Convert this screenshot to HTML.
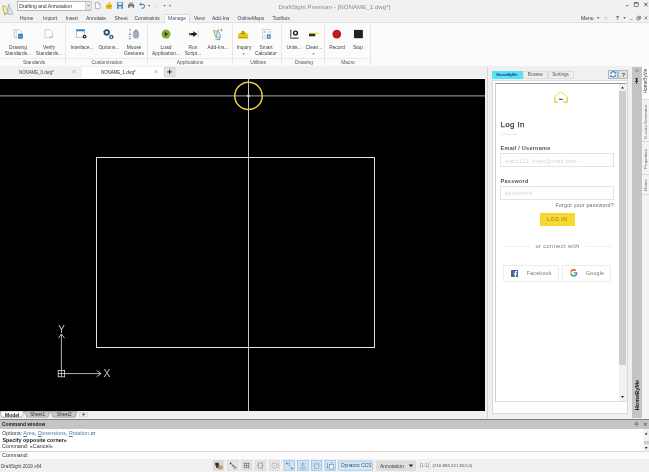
<!DOCTYPE html>
<html>
<head>
<meta charset="utf-8">
<title>DraftSight Premium - [NONAME_1.dwg*]</title>
<style>
*{box-sizing:border-box;margin:0;padding:0}
html,body{width:649px;height:472px;overflow:hidden;background:#f0f0f0;font-family:"Liberation Sans",sans-serif;color:#333}
#app{position:relative;width:649px;height:472px;overflow:hidden;background:#f0f0f0;will-change:transform}
.a{position:absolute}
.t{position:absolute;white-space:nowrap;font-size:5.2px;line-height:6px;color:#444}
.c{text-align:center;transform:translateX(-50%)}
/* title */
#title{left:0;top:0;width:649px;height:23px;background:#f1f1f1}
#combo{left:17px;top:1px;width:74px;height:10px;background:#fff;border:1px solid #b8b8b8}
#ribbon{left:0;top:22px;width:649px;height:44.500px;background:#fbfbfb;border-top:0.700px solid #e0e0e0;border-bottom:0.800px solid #d6d6d6}
.rt{top:15.100px;font-size:5px;color:#444}
.vsep{position:absolute;top:24.500px;width:1px;height:40.500px;background:#e6e6e6}
.hsep{position:absolute;top:58px;height:1px;background:#ebebeb}
.gl{top:58.700px;color:#555}
.bl{top:44.100px;line-height:6.3px;color:#444}
.c.bl,.c.gl{transform:translateX(-50%) scaleX(0.940)}
#doctabs{left:0;top:66px;width:649px;height:12px;background:#f0f0f0}
#canvas{left:0;top:78.700px;width:485.200px;height:332.100px;background:#000;overflow:hidden}
</style>
</head>
<body>
<div id="app">
<!-- TITLE BAR -->
<div id="title" class="a"></div>
<div id="combo" class="a"></div>
<div class="t" style="left:19.200px;top:2.600px;color:#333;font-size:5.050px">Drafting and Annotation</div>
<div class="t" style="left:278.600px;top:3.200px;font-size:6.150px;line-height:7px;color:#8a8a8a">DraftSight Premium - [NONAME_1.dwg*]</div>


<!-- QUICK ACCESS + WINDOW CONTROLS -->
<svg class="a" style="left:0;top:0" width="649" height="23" viewBox="0 0 649 23">
  <!-- logo -->
  <path d="M2.600 6 C6.500 5.500 8 8.500 7.300 13 L4.800 14.600 Z" fill="#f1eec8" stroke="#b9b44a" stroke-width="1" stroke-linejoin="round"/>
  <path d="M4 13 L5.200 14.800 L6.500 13.600 Z" fill="#86a838"/>
  <path d="M8.600 4.200 L13.200 14.300 H7.800 Z" fill="#dfe8ee" stroke="#9fb3c0" stroke-width="0.800" stroke-linejoin="round"/>
  <!-- combo arrow -->
  <rect x="85.500" y="1.500" width="6" height="8.500" fill="#e6e6e6" stroke="#b5b5b5" stroke-width="0.500"/>
  <path d="M87.300 4.800 L88.500 6.200 L89.700 4.800" stroke="#555" stroke-width="0.600" fill="none"/>
  <!-- new -->
  <path d="M95.400 2.300 H98.200 L100 4.200 V8.600 H95.400 Z" fill="#fff" stroke="#8a8a8a" stroke-width="0.600"/>
  <path d="M98.200 2.300 V4.200 H100" stroke="#8a8a8a" stroke-width="0.500" fill="none"/>
  <!-- open -->
  <path d="M106.200 4.500 H108.500 V2.400 H110.500 V4.500 H111.800 V9 H106.200 Z" fill="#e5c21d"/>
  <path d="M106.200 6.300 H111.800" stroke="#8a7410" stroke-width="0.600"/>
  <!-- save -->
  <rect x="117.200" y="2.300" width="5.600" height="6.500" rx="0.500" fill="#2d7fc0"/>
  <rect x="118.400" y="2.600" width="3.200" height="2.300" fill="#e9f2fa"/>
  <rect x="118.700" y="6.200" width="2.600" height="2.600" fill="#dbe9f5"/>
  <!-- print -->
  <rect x="128" y="4.300" width="6.200" height="3.600" rx="0.800" fill="#6d6d6d"/>
  <rect x="129.300" y="2.600" width="3.600" height="2" fill="#8d8d8d"/>
  <rect x="129.500" y="6.300" width="3.200" height="2.200" fill="#e8e8e8"/>
  <!-- undo -->
  <path d="M140.200 4.300 H143 Q144.500 4.300 144.500 6 Q144.500 8 143 8.200 H141.500" fill="none" stroke="#2d7fc0" stroke-width="1"/>
  <path d="M141.200 2.600 L139.200 4.300 L141.200 6 Z" fill="#2d7fc0"/>
  <path d="M148 5 H150.200 L149.100 6.300 Z" fill="#333"/>
  <!-- redo (disabled) -->
  <path d="M158.500 4.300 H156.500 Q155.200 4.300 155.200 6 Q155.200 8 156.800 8.200 H158" fill="none" stroke="#dcdcdc" stroke-width="0.900"/>
  <path d="M163.500 5 H165.700 L164.600 6.300 Z" fill="#444"/>
  <rect x="169.300" y="5" width="1.400" height="1.400" fill="#666"/>
  <!-- window buttons -->
  <path d="M626 5.700 H628.200" stroke="#444" stroke-width="0.800"/>
  <rect x="634.200" y="2.800" width="4" height="3.800" fill="none" stroke="#444" stroke-width="0.600"/>
  <path d="M634.200 3 H638.200" stroke="#444" stroke-width="0.900"/>
  <path d="M644.200 2.700 L647.600 6.300 M647.600 2.700 L644.200 6.300" stroke="#333" stroke-width="0.800"/>
  <!-- second row -->
  <path d="M597 17.300 H599.400 L598.200 18.700 Z" fill="#333"/>
  <path d="M604.500 17 L607.500 19.300 M607.500 17 L604.500 19.300 M606 16.600 V19.700" stroke="#c2c2c2" stroke-width="0.500"/>
  <path d="M623.400 17.300 H625.800 L624.600 18.700 Z" fill="#333"/>
  <path d="M629.800 19.600 H632.600" stroke="#9a9a9a" stroke-width="0.700"/>
  <rect x="637" y="17.300" width="2.600" height="2.600" fill="none" stroke="#444" stroke-width="0.550"/>
  <path d="M638 17.300 V16.300 H640.600 V18.900 H639.600" fill="none" stroke="#444" stroke-width="0.550"/>
  <path d="M644.600 16.500 L647.400 19.500 M647.400 16.500 L644.600 19.500" stroke="#555" stroke-width="0.600"/>
</svg>
<div class="t" style="left:615.800px;top:15px;font-size:5.400px;font-weight:bold;color:#444">?</div>

<!-- RIBBON TABS -->
<div class="a" style="left:163.800px;top:13.700px;width:26px;height:9.300px;background:#fbfbfb;border:0.700px solid #dcdcdc;border-bottom:none;z-index:2"></div>
<div class="t rt" style="left:20px">Home</div>
<div class="t rt" style="left:43px">Import</div>
<div class="t rt" style="left:65.5px">Insert</div>
<div class="t rt" style="left:86px">Annotate</div>
<div class="t rt" style="left:114.5px">Sheet</div>
<div class="t rt" style="left:134.5px">Constraints</div>
<div class="t rt" style="left:168px;color:#44607e;z-index:3">Manage</div>
<div class="t rt" style="left:194px">View</div>
<div class="t rt" style="left:212px">Add-Ins</div>
<div class="t rt" style="left:237.5px">OnlineMaps</div>
<div class="t rt" style="left:272.5px">Toolbox</div>
<div class="t rt" style="left:581px;top:15px;color:#333">Menu</div>

<!-- RIBBON BODY -->
<div id="ribbon" class="a"></div>
<div class="vsep" style="left:65px"></div>
<div class="vsep" style="left:147px"></div>
<div class="vsep" style="left:232px"></div>
<div class="vsep" style="left:281px"></div>
<div class="vsep" style="left:324px"></div>
<div class="vsep" style="left:370px"></div>
<div class="hsep" style="left:0px;width:65px"></div>
<div class="hsep" style="left:66px;width:81px"></div>
<div class="hsep" style="left:148px;width:84px"></div>
<div class="hsep" style="left:233px;width:48px"></div>
<div class="hsep" style="left:282px;width:42px"></div>
<div class="hsep" style="left:325px;width:45px"></div>

<div class="t c bl" style="left:18px">Drawing<br>Standards...</div>
<div class="t c bl" style="left:49px">Verify<br>Standards...</div>
<div class="t c bl" style="left:81.700px">Interface...</div>
<div class="t c bl" style="left:108.600px">Options...</div>
<div class="t c bl" style="left:134px">Mouse<br>Gestures</div>
<div class="t c bl" style="left:166px">Load<br>Application...</div>
<div class="t c bl" style="left:193px">Run<br>Script...</div>
<div class="t c bl" style="left:218px">Add-Ins...</div>
<div class="t c bl" style="left:243.5px">Inquiry</div>
<div class="t c bl" style="left:266px">Smart<br>Calculator</div>
<div class="t c bl" style="left:294px">Units...</div>
<div class="t c bl" style="left:313.5px">Clean...</div>
<div class="t c bl" style="left:337px">Record</div>
<div class="t c bl" style="left:358px">Stop</div>

<div class="t c gl" style="left:34px">Standards</div>
<div class="t c gl" style="left:106.800px">Customization</div>
<div class="t c gl" style="left:190px">Applications</div>
<div class="t c gl" style="left:257.500px">Utilities</div>
<div class="t c gl" style="left:303.5px">Drawing</div>
<div class="t c gl" style="left:347.5px">Macro</div>


<!-- RIBBON ICONS -->
<svg class="a" style="left:0;top:0" width="649" height="66" viewBox="0 0 649 66">
  <!-- drawing standards -->
  <path d="M14.300 29.700 H19.300 L21.700 32.200 V37.700 H14.300 Z" fill="#fdfdfd" stroke="#b4b4b4" stroke-width="0.700"/>
  <path d="M16.300 29.700 V37.700" stroke="#c4c4c4" stroke-width="0.600"/>
  <rect x="18.200" y="33.800" width="4.600" height="4.900" rx="0.500" fill="#2a7dbd"/>
  <path d="M19.300 35.300 L21.500 37.600 M21.600 35.300 L19.300 37.600" stroke="#8cc4ea" stroke-width="0.700"/>
  <!-- verify standards -->
  <path d="M45 29.700 H50 L52.400 32.200 V37.700 H45 Z" fill="#fdfdfd" stroke="#bdbdbd" stroke-width="0.700"/>
  <path d="M49.600 36.300 L50.800 37.700 L52.800 35.200" stroke="#9a9a9a" stroke-width="0.700" fill="none"/>
  <!-- interface -->
  <rect x="76.600" y="29.800" width="8" height="7.400" fill="#fff" stroke="#9a9a9a" stroke-width="0.600"/>
  <rect x="76.300" y="29.500" width="8.600" height="1.800" fill="#2d7fc0"/>
  <circle cx="84.600" cy="36.600" r="1.900" fill="#2b2b2b"/>
  <circle cx="84.600" cy="36.600" r="0.700" fill="#fff"/>
  <!-- options -->
  <circle cx="106.700" cy="32.400" r="2.100" fill="none" stroke="#1f4e79" stroke-width="1.500"/>
  <circle cx="106.700" cy="32.400" r="3" fill="none" stroke="#1f4e79" stroke-width="1" stroke-dasharray="1.200 1.156"/>
  <circle cx="111.300" cy="36.900" r="1.400" fill="none" stroke="#1f4e79" stroke-width="1.100"/>
  <circle cx="111.300" cy="36.900" r="2" fill="none" stroke="#1f4e79" stroke-width="0.700" stroke-dasharray="0.800 0.770"/>
  <!-- mouse gestures -->
  <rect x="133" y="30.200" width="6" height="8.400" rx="2.800" fill="#a9adb3"/>
  <rect x="135.300" y="29.200" width="1.400" height="3" rx="0.700" fill="#7d8289"/>
  <path d="M130 29.400 V39" stroke="#3b8bd0" stroke-width="0.700" stroke-dasharray="1 1.200"/>
  <circle cx="130" cy="29.600" r="0.700" fill="#2d7fc0"/><circle cx="130" cy="34.200" r="0.800" fill="#2d7fc0"/><circle cx="130" cy="38.700" r="0.700" fill="#2d7fc0"/>
  <!-- load application -->
  <circle cx="166" cy="34.100" r="4.500" fill="#86a838"/>
  <path d="M164.800 32 L168 34.100 L164.800 36.200 Z" fill="#2a2a1a"/>
  <!-- run script -->
  <path d="M189 32.900 H193.300 V31.300 L197.300 34.100 L193.300 36.900 V35.300 H189 Z" fill="#1c1c1c"/>
  <path d="M189.600 32.900 V35.300 M190.700 32.900 V35.300" stroke="#eee" stroke-width="0.350"/>
  <path d="M198.300 30.600 V37.600" stroke="#aaa" stroke-width="0.500"/>
  <!-- add-ins -->
  <path d="M213.500 30.500 C216.500 30.300 218 32.500 217.500 36.200 L215.700 37 Z" fill="#eef2d8" stroke="#8fae3c" stroke-width="0.900" stroke-linejoin="round"/>
  <path d="M218 29.500 L221 37.300 H216.200 Z" fill="#dfeaf2" stroke="#6e9bc0" stroke-width="0.800" stroke-linejoin="round"/>
  <path d="M221.500 28.700 V31.500 M220.100 30.100 H222.900" stroke="#6a8f3a" stroke-width="0.600"/>
  <path d="M215.500 39.300 H220 M218.800 38.300 L220.200 39.300 L218.800 40.300" stroke="#2d7fc0" stroke-width="0.700" fill="none"/>
  <!-- inquiry -->
  <path d="M238 38.800 V34 L241 32.200 L242 30.400 L244.500 31.400 L248.200 34.300 V38.800 Z" fill="#e9cc1f"/>
  <path d="M238.200 37.400 H248" stroke="#6b5c10" stroke-width="0.600" stroke-dasharray="1.200 0.700"/>
  <path d="M241 33.400 L244.800 33.800 M242.200 31.400 L244 32.200" stroke="#5a4d10" stroke-width="0.700"/>
  <!-- smart calculator -->
  <rect x="262.300" y="29.500" width="8.200" height="9.100" fill="#fbfbfb" stroke="#bdbdbd" stroke-width="0.600"/>
  <path d="M263.500 32 H265.700 M264.600 30.900 V33.100 M267.400 32 H269.400 M263.700 35.800 H265.500" stroke="#6b8fb0" stroke-width="0.500"/>
  <rect x="266.800" y="34.400" width="3.700" height="4.200" fill="#2d7fc0"/>
  <rect x="268" y="35.500" width="1.300" height="2.200" fill="#d5e8f6"/>
  <!-- units -->
  <path d="M290 29.600 H291.600 V37.300 H298.800 V38.900 H290 Z" fill="#8d939b"/>
  <path d="M290 30.600 H291 M290 31.800 H291 M290 33 H291 M290 34.200 H291 M290 35.400 H291 M293 38 V38.900 M294.300 38 V38.900 M295.600 38 V38.900 M296.900 38 V38.900" stroke="#2b2b2b" stroke-width="0.450"/>
  <circle cx="295.500" cy="33" r="1.900" fill="none" stroke="#1c1c1c" stroke-width="1.400"/>
  <!-- clean -->
  <rect x="309" y="32.700" width="10" height="1.200" fill="#eadb3c"/>
  <rect x="309" y="33.800" width="6.300" height="2.500" fill="#2b2b2b"/>
  <!-- record / stop -->
  <circle cx="336.800" cy="34.100" r="4.400" fill="#c2191c"/>
  <rect x="354" y="29.900" width="8.900" height="8.300" fill="#222"/>
  <!-- small drop arrows -->
  <path d="M242.600 53.500 H244.600 L243.600 54.700 Z" fill="#333"/>
  <path d="M312.600 53.500 H314.600 L313.600 54.700 Z" fill="#333"/>
</svg>

<!-- DOC TABS -->
<div id="doctabs" class="a"></div>
<div class="a" style="left:81.800px;top:66.500px;width:82px;height:11.500px;background:#fff"></div>
<svg class="a" style="left:60px;top:66px" width="120" height="12" viewBox="60 66 120 12">
  <path d="M72.300 70 L75.500 73.300 M75.500 70 L72.300 73.300" stroke="#8a8a8a" stroke-width="0.500"/>
  <path d="M154.500 70 L157.700 73.300 M157.700 70 L154.500 73.300" stroke="#8a8a8a" stroke-width="0.500"/>
  <rect x="164.200" y="67.300" width="10.800" height="9.200" fill="#e3e3e3" stroke="#bdbdbd" stroke-width="0.500"/>
  <path d="M167.300 71.900 H172 M169.650 69.500 V74.300" stroke="#222" stroke-width="0.900"/>
</svg>
<div class="t" style="left:19px;top:69.200px;color:#444;font-size:5px;transform:scaleX(0.870);transform-origin:0 0">NONAME_0.dwg*</div>
<div class="t" style="left:101px;top:69.200px;color:#333;font-size:5px;transform:scaleX(0.870);transform-origin:0 0">NONAME_1.dwg*</div>

<div class="a" style="left:0;top:77.500px;width:486px;height:1.300px;background:#fbfbfb"></div>
<!-- CANVAS -->
<div id="canvas" class="a">
<svg width="486" height="333" viewBox="0 78 486 333" style="position:absolute;left:0;top:-0.700px">
  <line x1="0" y1="95.900" x2="486" y2="95.900" stroke="#a9a9a9" stroke-width="1"/>
  <line x1="248.500" y1="78" x2="248.500" y2="411" stroke="#c6c6c6" stroke-width="1"/>
  <rect x="96.500" y="157.500" width="278" height="190" fill="none" stroke="#e4e4e4" stroke-width="1"/>
  <circle cx="248.500" cy="95.900" r="13.700" fill="none" stroke="#e6cf45" stroke-width="1.500"/>
  <rect x="247.200" y="94.500" width="2.600" height="2.800" rx="0.800" fill="#cfcfcf"/>
  <g fill="none" stroke="#e2e2e2" stroke-width="0.800">
    <rect x="58.200" y="370.400" width="6.400" height="6.400"/>
    <path d="M61.400 376.800 V334 M58.200 373.600 H101"/>
    <path d="M58.300 338.200 L61.400 334 L64.500 338.200"/>
    <path d="M96.600 370.500 L101 373.600 L96.600 376.800"/>
  </g>
  <text x="61.500" y="332.600" text-anchor="middle" font-family="Liberation Sans, sans-serif" font-size="11.300" fill="#c4c4c4" textLength="6.600" lengthAdjust="spacingAndGlyphs">Y</text>
  <text x="106.900" y="377.300" text-anchor="middle" font-family="Liberation Sans, sans-serif" font-size="10.200" fill="#c4c4c4">X</text>
</svg>
</div>

<!-- SHEET TABS -->
<div class="a" style="left:0;top:410.800px;width:486px;height:8.200px;background:#f0f0f0"></div>
<svg class="a" style="left:0;top:411px" width="100" height="9" viewBox="0 0 100 9">
  <path d="M24.300 0.400 L50 0.400 L48 6.200 L26.800 6.200 Z" fill="#c9c9c9" stroke="#7a7a7a" stroke-width="0.500"/>
  <path d="M50.600 0.400 L77 0.400 L75 6.200 L53 6.200 Z" fill="#c9c9c9" stroke="#7a7a7a" stroke-width="0.500"/>
  <path d="M0.800 0 L0.800 4.500 Q0.800 6.200 3 6.200 L21.700 6.200 L24 0 Z" fill="#fff" stroke="#666" stroke-width="0.500"/>
  <rect x="79.600" y="1.300" width="8" height="4.200" fill="#ececec" stroke="#c4c4c4" stroke-width="0.500"/>
  <path d="M82.100 3.400 H85.100 M83.600 2 V4.800" stroke="#333" stroke-width="0.650"/>
</svg>
<div class="t" style="left:5px;top:411.800px;font-weight:bold;color:#222;font-size:5px">Model</div>
<div class="t" style="left:30.200px;top:411.800px;color:#333;font-size:4.700px">Sheet1</div>
<div class="t" style="left:56.800px;top:411.800px;color:#333;font-size:4.700px">Sheet2</div>

<!-- RIGHT PANEL -->
<div class="a" style="left:486px;top:66px;width:163px;height:353px;background:#f0f0f0"></div>
<div class="a" style="left:487px;top:67px;width:1px;height:351px;background:#d4d4d4"></div>
<div class="a" style="left:632px;top:67px;width:10px;height:351px;background:#c4c4c4"></div>
<div class="a" style="left:642px;top:66px;width:7px;height:353px;background:#f3f3f3"></div>
<div class="a" style="left:642.300px;top:66px;width:6.700px;height:33.300px;background:#fff"></div>
<!-- panel tabs -->
<div class="a" style="left:491.500px;top:70.800px;width:31px;height:8.400px;background:#58e3f4"></div>
<div class="a" style="left:522.500px;top:70.800px;width:25.500px;height:8.400px;background:#eeeeee;border:0.500px solid #dddddd"></div>
<div class="a" style="left:548px;top:70.800px;width:25.500px;height:8.400px;background:#eeeeee;border:0.500px solid #dddddd"></div>
<div class="t" style="left:496.300px;top:72.400px;font-size:4.050px;color:#1b3c86;font-weight:bold;letter-spacing:-0.100px">HomeByMe</div>
<div class="t" style="left:527.800px;top:72.400px;font-size:4.600px;color:#555">Browse</div>
<div class="t" style="left:552.300px;top:72.400px;font-size:4.600px;color:#555">Settings</div>
<div class="a" style="left:608px;top:70.300px;width:10.400px;height:8.500px;background:#dfe6ea;border:0.500px solid #b8b8b8"></div>
<div class="a" style="left:618.400px;top:70.300px;width:9.600px;height:8.500px;background:#e0e0e0;border:0.500px solid #b8b8b8"></div>
<div class="t" style="left:621.700px;top:71.700px;font-size:5.400px;font-weight:bold;color:#444">?</div>
<svg class="a" style="left:608px;top:70.300px" width="10.400" height="8.500" viewBox="0 0 10.400 8.500">
  <circle cx="5.200" cy="4.300" r="3.300" fill="#f4f9fd"/>
  <path d="M2.600 4 A2.700 2.700 0 0 1 7.300 2.600" fill="none" stroke="#2a78c8" stroke-width="1.100"/>
  <path d="M7.800 4.600 A2.700 2.700 0 0 1 3.100 6" fill="none" stroke="#2a78c8" stroke-width="1.100"/>
  <path d="M6.400 3.400 L8.400 3.400 L8.200 1.400 Z" fill="#2a78c8"/>
  <path d="M4 5.200 L2 5.200 L2.200 7.200 Z" fill="#2a78c8"/>
</svg>
<!-- outer + inner white -->
<div class="a" style="left:491.500px;top:80px;width:136px;height:333.500px;background:#fff;border:0.500px solid #dadada"></div>
<div class="a" style="left:495px;top:83px;width:131.500px;height:318.500px;background:#fff;border:1px solid #dcdcdc;border-top-color:#9a9a9a;border-left:1.600px solid #d0d0d0;border-right-color:#efefef"></div>
<!-- scrollbar -->
<div class="a" style="left:618.500px;top:84px;width:7px;height:317px;background:#f1f1f1"></div>
<div class="a" style="left:619px;top:91px;width:6.500px;height:274px;background:#cdcdcd"></div>
<svg class="a" style="left:618.500px;top:84px" width="7" height="317" viewBox="0 0 7 317"><path d="M2 4.500 L3.500 2.500 L5 4.500 Z" fill="#222"/><path d="M2 312 L3.500 314 L5 312 Z" fill="#222"/></svg>

<!-- login content -->
<svg class="a" style="left:553px;top:90px" width="16" height="14" viewBox="553 90 16 14">
  <path d="M558.300 102.300 L554.900 102.300 L554.900 96.500 L561 91.700 L567.100 96.500 L567.100 102.300 L563.300 102.300" fill="none" stroke="#ebd94c" stroke-width="0.850" stroke-linejoin="round"/>
  <path d="M554.900 97.500 V102.300 H558.300 M567.100 97.500 V102.300 H563.300" fill="none" stroke="#e9d137" stroke-width="1.100"/>
  <rect x="558.900" y="98.850" width="3.900" height="0.950" rx="0.300" fill="#333"/>
</svg>
<div class="t" style="left:500.500px;top:120px;font-size:7.900px;line-height:10px;color:#3a3a3a;letter-spacing:0.400px;-webkit-text-stroke:0.250px #3a3a3a">Log In</div>
<div class="a" style="left:500.500px;top:133.900px;width:16px;height:0.700px;background:#e8e8e8"></div>
<div class="t" style="left:500.600px;top:145px;font-size:5.500px;color:#333;letter-spacing:0.250px;font-weight:bold;opacity:.85">Email / Username</div>
<div class="a" style="left:500px;top:153.200px;width:114px;height:14.300px;border:0.700px solid #e3e3e3;background:#fff"></div>
<div class="t" style="left:505px;top:157.500px;font-size:5.500px;color:#d2d2d2;letter-spacing:0.350px">marc123, marc@mail.com</div>
<div class="t" style="left:500.600px;top:177.600px;font-size:5.500px;color:#333;letter-spacing:0.250px;font-weight:bold;opacity:.85">Password</div>
<div class="a" style="left:500px;top:185.800px;width:114px;height:14px;border:0.700px solid #e3e3e3;background:#fff"></div>
<div class="t" style="left:504.800px;top:190px;font-size:5.500px;color:#d2d2d2;letter-spacing:0.500px">password</div>
<div class="t" style="left:555.500px;top:201.800px;font-size:5.300px;color:#6a6a6a;letter-spacing:0.200px">Forgot your password?</div>
<div class="a" style="left:539.500px;top:212.700px;width:35px;height:13.700px;background:#f7d730"></div>
<div class="t c" style="left:557.300px;top:216.700px;font-size:4.900px;color:#857a28;letter-spacing:0.650px">LOG IN</div>
<div class="a" style="left:503px;top:245.500px;width:27px;height:0.600px;background:#f1f1f1"></div>
<div class="a" style="left:585px;top:245.500px;width:27px;height:0.600px;background:#f1f1f1"></div>
<div class="t c" style="left:557.600px;top:242.500px;font-size:5.600px;color:#777;letter-spacing:0.450px">or connect with</div>
<div class="a" style="left:503.200px;top:264.500px;width:55.800px;height:17.300px;border:0.700px solid #ebebeb;border-radius:1px;background:#fff"></div>
<div class="a" style="left:562.400px;top:264.500px;width:49px;height:17.300px;border:0.700px solid #ebebeb;border-radius:1px;background:#fff"></div>
<svg class="a" style="left:510.800px;top:269.600px" width="7.200" height="7.200" viewBox="0 0 24 24"><rect width="24" height="24" rx="1.500" fill="#46699f"/><path d="M16.500 24 V14.700 H19.600 L20.100 11 H16.500 V8.700 C16.500 7.600 16.800 6.900 18.400 6.900 H20.200 V3.600 C19.900 3.560 18.800 3.460 17.500 3.460 C14.800 3.460 12.900 5.100 12.900 8.200 V11 H9.800 V14.700 H12.900 V24 Z" fill="#fff"/></svg>
<div class="t" style="left:526.800px;top:270.300px;font-size:5.200px;color:#777;letter-spacing:0.250px">Facebook</div>
<svg class="a" style="left:570px;top:269.300px" width="7.600" height="7.600" viewBox="0 0 48 48"><path fill="#EA4335" d="M24 9.500c3.540 0 6.710 1.220 9.210 3.600l6.850-6.850C35.900 2.380 30.470 0 24 0 14.620 0 6.510 5.380 2.560 13.220l7.980 6.190C12.430 13.720 17.740 9.500 24 9.500z"/><path fill="#4285F4" d="M46.980 24.550c0-1.570-.15-3.090-.38-4.550H24v9.020h12.940c-.58 2.960-2.260 5.480-4.780 7.180l7.730 6c4.510-4.180 7.090-10.360 7.090-17.650z"/><path fill="#FBBC05" d="M10.530 28.590c-.48-1.450-.76-2.990-.76-4.590s.27-3.140.76-4.590l-7.980-6.190C.92 16.460 0 20.120 0 24c0 3.880.92 7.540 2.560 10.780l7.970-6.190z"/><path fill="#34A853" d="M24 48c6.480 0 11.930-2.130 15.890-5.810l-7.730-6c-2.150 1.450-4.920 2.300-8.160 2.300-6.260 0-11.570-4.220-13.470-9.910l-7.980 6.190C6.510 42.620 14.620 48 24 48z"/></svg>
<div class="t" style="left:586px;top:270.300px;font-size:5.200px;color:#777;letter-spacing:0.250px">Google</div>

<!-- vertical tabs -->
<div class="a" style="left:642px;top:99.300px;width:7px;height:0.600px;background:#dcdcdc"></div>
<div class="a" style="left:642px;top:141.300px;width:7px;height:0.600px;background:#dcdcdc"></div>
<div class="a" style="left:642px;top:173.500px;width:7px;height:0.600px;background:#dcdcdc"></div>
<div class="a" style="left:642px;top:194px;width:7px;height:0.600px;background:#dcdcdc"></div>
<div class="t" style="left:645.700px;top:80.700px;font-size:4.750px;color:#444;transform:translate(-50%,-50%) rotate(-90deg)">HomeByMe</div>
<div class="t" style="left:645.700px;top:122px;font-size:4.300px;color:#6e6e6e;transform:translate(-50%,-50%) rotate(-90deg)">G-code Generator</div>
<div class="t" style="left:645.700px;top:158.800px;font-size:4.300px;color:#6e6e6e;transform:translate(-50%,-50%) rotate(-90deg)">Properties</div>
<div class="t" style="left:645.700px;top:185.200px;font-size:4.300px;color:#6e6e6e;transform:translate(-50%,-50%) rotate(-90deg)">Home</div>
<div class="t" style="left:636.600px;top:394.600px;font-size:5.600px;font-weight:bold;color:#222;transform:translate(-50%,-50%) rotate(-90deg)">HomeByMe</div>
<svg class="a" style="left:632px;top:67px" width="10" height="20" viewBox="0 0 10 20">
  <path d="M3.600 2.200 L6.200 4.800 M6.200 2.200 L3.600 4.800" stroke="#555" stroke-width="0.600"/>
  <path d="M3.400 11.500 H5.800 M3 14.500 H6.200 M4.600 14.500 V17" stroke="#222" stroke-width="0.800" fill="none"/>
  <rect x="3.900" y="11.500" width="1.400" height="3" fill="#222"/>
</svg>

<!-- COMMAND WINDOW -->
<div class="a" style="left:0;top:419px;width:649px;height:10.500px;background:#c5c5c5;border-top:1px solid #7d7d7d"></div>
<div class="t" style="left:2px;top:422px;font-size:4.900px;font-weight:bold;color:#222">Command window</div>
<div class="a" style="left:0;top:429.300px;width:649px;height:29.500px;background:#fbfbfb"></div><div class="a" style="left:0;top:429.300px;width:649px;height:21.900px;background:#fff"></div>
<div class="a" style="left:0;top:451px;width:649px;height:0.700px;background:#d9d9d9"></div>
<div class="t" style="left:2px;top:430px;font-size:5.400px;color:#333">Options: <span style="color:#4c7fb0;text-decoration:underline">A</span><span style="color:#4c7fb0">rea</span>, <span style="color:#4c7fb0;text-decoration:underline">D</span><span style="color:#4c7fb0">imensions</span>, <span style="color:#4c7fb0;text-decoration:underline">R</span><span style="color:#4c7fb0">otation</span> or</div>
<div class="t" style="left:2.400px;top:437px;font-size:5.400px;color:#222;font-weight:bold">Specify opposite corner»</div>
<div class="t" style="left:2px;top:443.200px;font-size:5.400px;color:#333">Command: «Cancel»</div>
<div class="t" style="left:2px;top:451.800px;font-size:5.400px;color:#333">Command:</div>

<!-- STATUS BAR -->
<div class="a" style="left:0;top:458.800px;width:649px;height:13.200px;background:#f0f0f0"></div>
<div class="t" style="left:1px;top:463.500px;font-size:4.600px;color:#444">DraftSight 2019 x64</div>

<svg class="a" style="left:200px;top:458px" width="290" height="14" viewBox="200 458 290 14">
  <g stroke-width="0.500">
  <rect x="213.300" y="460.700" width="10" height="9.500" fill="#d9d9d9" stroke="#cfcfcf"/>
  <rect x="227.800" y="460.700" width="10.300" height="9.500" fill="#e6e6e6" stroke="#cdcdcd"/>
  <rect x="241.400" y="460.700" width="10.300" height="9.500" fill="#e6e6e6" stroke="#cdcdcd"/>
  <rect x="255.400" y="460.700" width="10" height="9.500" fill="#e6e6e6" stroke="#cdcdcd"/>
  <rect x="269.400" y="460.700" width="10.200" height="9.500" fill="#e6e6e6" stroke="#cdcdcd"/>
  <rect x="284" y="460.700" width="10.500" height="9.500" fill="#cfe4f6" stroke="#6fa8dc"/>
  <rect x="297.700" y="460.700" width="10.500" height="9.500" fill="#cfe4f6" stroke="#6fa8dc"/>
  <rect x="311.300" y="460.700" width="10.500" height="9.500" fill="#cfe4f6" stroke="#6fa8dc"/>
  <rect x="325" y="460.700" width="10.300" height="9.500" fill="#cfe4f6" stroke="#6fa8dc"/>
  <rect x="338.500" y="461" width="34" height="9.300" rx="0.800" fill="#d6e8f8" stroke="#6fa8dc"/>
  <rect x="376.800" y="461" width="38.800" height="9.300" fill="#dedede" stroke="#cfcfcf"/>
  </g>
  <!-- icon1: layers -->
  <rect x="215.200" y="462.800" width="3.600" height="2.600" fill="#2b2b2b"/>
  <rect x="216" y="464.600" width="3.200" height="3.200" fill="#3a3a3a"/>
  <rect x="218.300" y="466" width="3.800" height="2.800" fill="#d9b632" stroke="#7a6415" stroke-width="0.400"/>
  <!-- icon2: snap -->
  <path d="M230.500 463.300 L235.500 467.800" stroke="#555" stroke-width="0.500"/>
  <rect x="229.800" y="462.600" width="1.600" height="1.600" fill="#444"/>
  <rect x="232.300" y="464.800" width="1.400" height="1.400" fill="#555"/>
  <path d="M234 466.400 L236.200 466.800 L235.800 468.800 L233.800 468.300 Z" fill="none" stroke="#555" stroke-width="0.450"/>
  <!-- icon3: grid -->
  <path d="M243.300 463.500 H249.800 M243.300 465.400 H249.800 M243.300 467.300 H249.800 M244.600 462.400 V468.600 M246.550 462.400 V468.600 M248.500 462.400 V468.600" stroke="#555" stroke-width="0.450"/>
  <!-- icon4: ortho -->
  <path d="M258.300 463 H262.300 V468 H258.300 Z M256.800 465.500 H258.300 M262.300 463 V462 M262.300 468 V469 M262.300 465.500 H263.800" fill="none" stroke="#666" stroke-width="0.500"/>
  <!-- icon5: polar -->
  <circle cx="274.500" cy="465.500" r="2.600" fill="#f4f4f4" stroke="#777" stroke-width="0.500"/>
  <circle cx="274.500" cy="465.500" r="0.500" fill="#3b7fc0"/>
  <path d="M278.200 463.200 V467.800" stroke="#999" stroke-width="0.400" stroke-dasharray="0.600 0.600"/>
  <!-- icon6 -->
  <path d="M286.200 463 H289.500 V465.200 M287.200 464 L291.800 468.300" fill="none" stroke="#5d7d99" stroke-width="0.450"/>
  <rect x="286" y="462.800" width="1.300" height="1.300" fill="#4d6f8e"/>
  <rect x="291.500" y="467.800" width="1.300" height="1.300" fill="#c0181c"/>
  <!-- icon7 -->
  <path d="M302.900 462.500 L300.200 468.800 H305.600 Z M302.900 462.500 V468.800" fill="none" stroke="#6b93b5" stroke-width="0.500"/>
  <path d="M299.800 464 L301 463 M306 464 L304.800 463" stroke="#6b93b5" stroke-width="0.400"/>
  <!-- icon8 -->
  <rect x="314.300" y="464" width="4.600" height="4.200" fill="none" stroke="#6b93b5" stroke-width="0.500"/>
  <path d="M313 462.500 L314.300 464 M320.200 462.500 L318.900 464 M316.600 462 V463.600 M312.800 466 H314 M319.200 466 H320.500" stroke="#6b93b5" stroke-width="0.450"/>
  <!-- icon9 -->
  <rect x="329.500" y="464.700" width="4.300" height="4.300" fill="#eef5fb" stroke="#557a9c" stroke-width="0.500"/>
  <path d="M327.500 463 V468.500 M326.500 467.300 H328.500 M331 462.800 H333 " stroke="#4a7096" stroke-width="0.500"/>
  <!-- annotation arrow -->
  <path d="M408.800 464.600 H413 L410.900 467.300 Z" fill="#222"/>
  <path d="M429.800 461 V470.300" stroke="#cfcfcf" stroke-width="0.500"/>
</svg>
<div class="t" style="left:341.300px;top:462.700px;font-size:4.800px;color:#2c4a66">Dynamic CCS</div>
<div class="t" style="left:380px;top:462.600px;font-size:5px;color:#444">Annotation</div>
<div class="t" style="left:419.500px;top:462.900px;font-size:4.700px;color:#777">(1:1)</div>
<div class="t" style="left:432.500px;top:462.900px;font-size:4.400px;color:#555">(216.883,321.852,0)</div>
<!-- cmd window right controls -->
<svg class="a" style="left:626px;top:419px" width="23" height="40" viewBox="626 419 23 40">
  <rect x="643.400" y="429.300" width="5.600" height="21.900" fill="#f1f1f1"/>
  <rect x="643.900" y="441" width="5.100" height="3.300" fill="#cdcdcd"/>
  <path d="M635.200 422.200 H637.600 V424.600 H635.200 Z M634.400 424.600 H638.400 M636.400 424.600 V426.600" fill="#999" stroke="#777" stroke-width="0.500"/>
  <path d="M643.800 422.600 L646.900 425.800 M646.900 422.600 L643.800 425.800" stroke="#333" stroke-width="0.700"/>
  <path d="M644.800 434.600 L646.200 432.600 L647.600 434.600 Z" fill="#222"/>
  <path d="M644.800 447 L646.200 449 L647.600 447 Z" fill="#222"/>
</svg>

</div>
</body>
</html>
